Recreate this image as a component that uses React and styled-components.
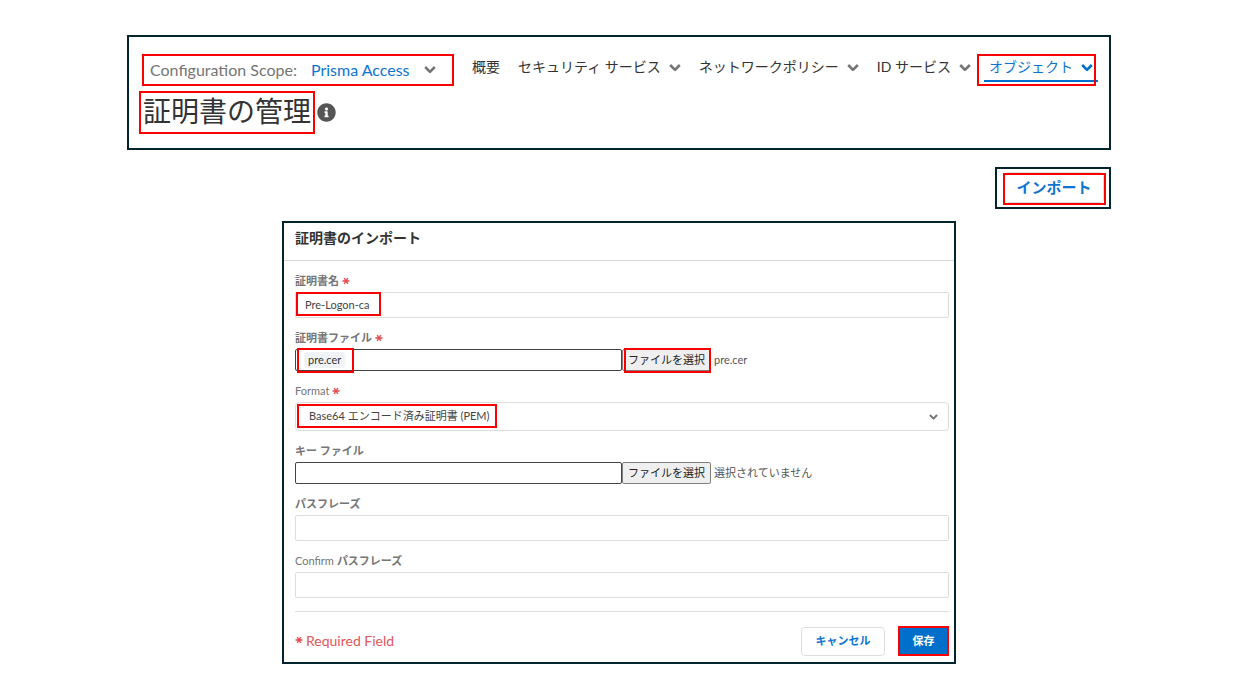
import React, { useState } from 'react';
import styled, { createGlobalStyle } from 'styled-components';
import { FaInfoCircle } from 'react-icons/fa';

const GlobalStyle = createGlobalStyle`
  * {
    box-sizing: border-box;
  }

  body {
    margin: 0;
    background: #ffffff;
    color: #333333;
    font-family: Lato, "Noto Sans CJK JP", sans-serif;
    font-size: 11px;
  }

  button, input, select {
    font-family: inherit;
    font-size: inherit;
    color: inherit;
    margin: 0;
  }
`;

const Page = styled.main`
  display: flex;
  flex-direction: column;
  max-width: 1238px;
  margin: 0 auto;
  padding: 35px 125px 32px 127px;
`;

const Panel = styled.section`
  border: 2px solid #02242f;
  background: #ffffff;
`;

const HeaderPanel = styled(Panel)`
  padding: 17px 10px 14px;
`;

// Red frame laid over the part that the reader should look at
const Mark = styled.span`
  position: absolute;
  inset: ${({ $inset }) => $inset || '0'};
  width: ${({ $width }) => $width || 'auto'};
  border: 2px solid #fa0000;
  pointer-events: none;
`;

const TopBar = styled.div`
  display: flex;
  align-items: flex-start;
  gap: 13px;
  padding-left: 3px;
`;

const Scope = styled.button`
  display: flex;
  align-items: center;
  gap: 14px;
  width: 312px;
  height: 32px;
  padding: 0 6px 2px;
  border: 2px solid #fa0000;
  background: transparent;
  font-size: 16px;
  white-space: nowrap;
  color: #757575;
`;

const ScopeValue = styled.span`
  color: #0d74d1;
`;

const Nav = styled.nav`
  display: flex;
  gap: 8px;
`;

const NavItem = styled.a`
  position: relative;
  display: flex;
  align-items: center;
  gap: 8px;
  padding: 0 5px;
  border-bottom: 2px solid ${({ $active }) => ($active ? '#006fcc' : 'transparent')};
  color: ${({ $active }) => ($active ? '#0d74d1' : '#333333')};
  font-size: 14px;
  line-height: 26px;
  white-space: nowrap;
  text-decoration: none;
`;

const ChevronIcon = styled.svg`
  flex: none;
  width: ${({ $size }) => $size || 12}px;
  height: ${({ $size }) => $size || 12}px;
  fill: none;
  stroke: ${({ $color }) => $color || '#757575'};
  stroke-width: 2.6;
  stroke-linejoin: round;
`;

const TitleRow = styled.div`
  display: flex;
  align-items: center;
  gap: 2px;
  margin-top: 5px;
`;

const Title = styled.h1`
  margin: 0;
  padding: 0 2px 2px;
  border: 2px solid #fa0000;
  font-size: 28px;
  font-weight: 400;
  line-height: 37px;
`;

const InfoIcon = styled(FaInfoCircle)`
  width: 19px;
  height: 19px;
  color: #555555;
`;

const ImportPanel = styled(Panel)`
  align-self: flex-end;
  margin-top: 17px;
  padding: 3px 5px 4px 7px;
`;

const Button = styled.button`
  position: relative;
  padding: 0 0 2px;
  border: 1px solid #dcdfe1;
  border-radius: 4px;
  background: #ffffff;
  color: #0d74d1;
  font-weight: 700;
  white-space: nowrap;
`;

const ImportButton = styled(Button)`
  display: block;
  width: 100px;
  height: 31px;
  font-size: 15px;
`;

const FormPanel = styled(Panel)`
  align-self: center;
  width: 100%;
  max-width: 674px;
  margin-top: 12px;
`;

const FormTitle = styled.h2`
  margin: 0;
  padding: 0 11px 7px;
  border-bottom: 1px solid #dadada;
  font-size: 14px;
  font-weight: 700;
  line-height: 30px;
`;

const Form = styled.form`
  display: flex;
  flex-direction: column;
  gap: 10px;
  padding: 10px 5px 6px 11px;
`;

const Field = styled.div`
  display: flex;
  flex-direction: column;
  gap: 1px;
`;

const Label = styled.label`
  display: flex;
  align-items: center;
  gap: 3px;
  color: #757575;
  line-height: 20px;
`;

const Strong = styled.span`
  font-weight: 700;
`;

const StarIcon = styled.svg`
  flex: none;
  width: 8px;
  height: 8px;
  fill: none;
  stroke: #e5484d;
  stroke-width: 1.4;
`;

const Control = styled.div`
  position: relative;
  display: flex;
  align-items: center;
`;

const TextInput = styled.input`
  width: 100%;
  height: 26px;
  padding: 0 9px 2px;
  border: 1px solid #dddddd;
  border-radius: 2px;
  background: #ffffff;
  color: #444444;
`;

const Select = styled.select`
  appearance: none;
  width: 100%;
  height: 29px;
  padding: 0 13px 2px;
  border: 1px solid #dddddd;
  border-radius: 4px;
  background: #ffffff;
  color: #444444;
`;

const SelectArrow = styled(ChevronIcon)`
  position: absolute;
  right: 11px;
  pointer-events: none;
`;

const FileBox = styled.div`
  display: flex;
  align-items: center;
  width: 50%;
  height: 22px;
  padding: 0 8px;
  border: 1px solid #444444;
  border-radius: 2px;
`;

const FileChip = styled.span`
  padding: 0 4px;
  border-radius: 3px;
  background: #eff3f6;
  line-height: 16px;
`;

const FileInput = styled.input`
  flex: 1;
  min-width: 0;
  height: 100%;
  padding: 0;
  border: 0;
  background: transparent;
`;

const FileButton = styled.button`
  position: relative;
  height: 22px;
  margin: 0 3px 0 0;
  padding: 0 5px 2px;
  border: 1px solid #808080;
  border-radius: 2px;
  background: #efefef;
  color: #222222;
  white-space: nowrap;
`;

const FileState = styled.span`
  padding-bottom: 2px;
  color: #555555;
`;

const Footer = styled.footer`
  display: flex;
  align-items: center;
  gap: 13px;
  margin-top: 3px;
  padding-top: 14px;
  border-top: 1px solid #dddddd;
`;

const Required = styled.p`
  display: flex;
  align-items: center;
  gap: 3px;
  flex: 1;
  margin: 0;
  padding-bottom: 2px;
  color: #e0555a;
  font-size: 14px;
`;

const CancelButton = styled(Button)`
  width: 84px;
  height: 29px;
`;

const SaveButton = styled(Button)`
  width: 51px;
  height: 30px;
  border: 2px solid #fa0000;
  border-radius: 0;
  background: #006fcc;
  color: #ffffff;
`;

const navItems = [
  { text: '概要' },
  { text: 'セキュリティ サービス', menu: true },
  { text: 'ネットワークポリシー', menu: true },
  { text: 'ID サービス', menu: true },
  { text: 'オブジェクト', menu: true, active: true },
];

const Chevron = ({ as: Icon = ChevronIcon, size, color }) => (
  <Icon viewBox="0 0 12 12" $size={size} $color={color} aria-hidden="true">
    <path d="M1.2 4 L6 8.8 L10.8 4" />
  </Icon>
);

const Star = () => (
  <StarIcon viewBox="0 0 8 8" aria-hidden="true">
    <path d="M0.5 4 H7.5 M2.2 1 L5.8 7 M5.8 1 L2.2 7" />
  </StarIcon>
);

const FileField = ({ id, label, required, chip, state, marked }) => (
  <Field>
    <Label htmlFor={id}>
      <Strong>{label}</Strong>
      {required && <Star />}
    </Label>
    <Control>
      <FileBox>
        {chip && <FileChip>{chip}</FileChip>}
        <FileInput id={id} type="text" readOnly />
      </FileBox>
      {marked && <Mark $inset="-1px auto -2px 2px" $width="57px" />}
      <FileButton type="button">
        ファイルを選択
        {marked && <Mark $inset="-2px -1px -3px 1px" />}
      </FileButton>
      <FileState>{state}</FileState>
    </Control>
  </Field>
);

const App = () => {
  const [name, setName] = useState('Pre-Logon-ca');

  return (
    <Page>
      <GlobalStyle />
      <HeaderPanel as="header">
        <TopBar>
          <Scope type="button">
            <span>Configuration Scope:</span>
            <ScopeValue>Prisma Access</ScopeValue>
            <Chevron />
          </Scope>
          <Nav>
            {navItems.map((item) => (
              <NavItem key={item.text} href="#" $active={item.active}>
                {item.text}
                {item.menu && <Chevron color={item.active ? '#006fcc' : undefined} />}
                {item.active && <Mark $inset="0 2px -6px -7px" />}
              </NavItem>
            ))}
          </Nav>
        </TopBar>
        <TitleRow>
          <Title>証明書の管理</Title>
          <InfoIcon />
        </TitleRow>
      </HeaderPanel>

      <ImportPanel>
        <ImportButton type="button">
          インポート
          <Mark $inset="0 -3px -3px -2px" />
        </ImportButton>
      </ImportPanel>

      <FormPanel>
        <FormTitle>証明書のインポート</FormTitle>
        <Form onSubmit={(e) => e.preventDefault()}>
          <Field>
            <Label htmlFor="cert-name">
              <Strong>証明書名</Strong>
              <Star />
            </Label>
            <Control>
              <TextInput id="cert-name" value={name} onChange={(e) => setName(e.target.value)} />
              <Mark $inset="0 auto 2px 1px" $width="85px" />
            </Control>
          </Field>

          <FileField
            id="cert-file"
            label="証明書ファイル"
            required
            chip="pre.cer"
            state="pre.cer"
            marked
          />

          <Field>
            <Label htmlFor="format">
              Format
              <Star />
            </Label>
            <Control>
              <Select id="format" defaultValue="pem">
                <option value="pem">Base64 エンコード済み証明書 (PEM)</option>
              </Select>
              <Chevron as={SelectArrow} size={9} />
              <Mark $inset="2px auto 3px 2px" $width="200px" />
            </Control>
          </Field>

          <FileField id="key-file" label="キー ファイル" state="選択されていません" />

          <Field>
            <Label htmlFor="passphrase">
              <Strong>パスフレーズ</Strong>
            </Label>
            <TextInput id="passphrase" type="password" />
          </Field>

          <Field>
            <Label htmlFor="confirm">
              Confirm
              <Strong>パスフレーズ</Strong>
            </Label>
            <TextInput id="confirm" type="password" />
          </Field>

          <Footer>
            <Required>
              <Star />
              Required Field
            </Required>
            <CancelButton type="button">キャンセル</CancelButton>
            <SaveButton type="submit">保存</SaveButton>
          </Footer>
        </Form>
      </FormPanel>
    </Page>
  );
};

export default App;
